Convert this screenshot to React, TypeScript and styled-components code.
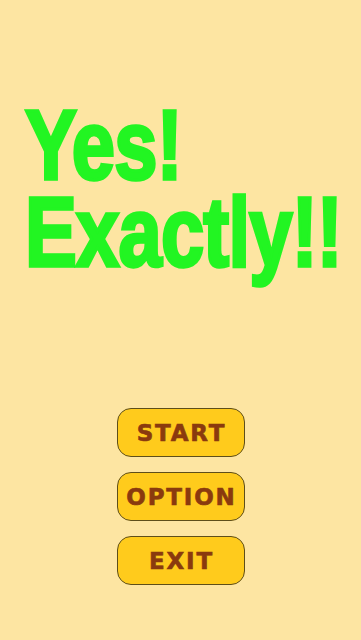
import React from 'react';
import styled, { createGlobalStyle } from 'styled-components';

const GlobalStyle = createGlobalStyle`
  html, body {
    margin: 0;
    padding: 0;
    background: #fde5a2;
  }
  #root {
    min-height: 100vh;
  }
`;

const Screen = styled.div`
  width: 100%;
  height: 100vh;
  background: #fde5a2;
  display: flex;
  flex-direction: column;
  align-items: stretch;
  overflow: hidden;
`;

// Impact-like heading: Arial bold squeezed horizontally and thickened
const Title = styled.h1`
  margin: 101px 0 0 25px;
  font-family: 'Liberation Sans', Arial, sans-serif;
  font-weight: 700;
  font-size: 99px;
  line-height: 87px;
  color: #22f522;
  -webkit-text-stroke: 3.5px #22f522;
  letter-spacing: -1px;
  transform-origin: left top;
  transform: scaleX(0.785);
  white-space: nowrap;
`;

const Menu = styled.div`
  margin-top: auto;
  margin-bottom: 55px;
  display: flex;
  flex-direction: column;
  align-items: center;
  gap: 15px;
`;

const MenuButton = styled.button`
  width: 128px;
  height: 49px;
  box-sizing: border-box;
  border-radius: 14px;
  border: 1.5px solid #5e4e1a;
  background: #ffcb1c;
  color: #8a3a0e;
  font-family: 'DejaVu Sans', Verdana, sans-serif;
  font-weight: 700;
  font-size: 23px;
  letter-spacing: 1.8px;
  -webkit-text-stroke: 0.6px #8a3a0e;
  padding: 0 0 0 2px;
  display: flex;
  align-items: center;
  justify-content: center;
  cursor: pointer;
`;

const App: React.FC = () => {
  return (
    <>
      <GlobalStyle />
      <Screen>
        <Title>
          Yes!
          <br />
          Exactly!!
        </Title>
        <Menu>
          <MenuButton>START</MenuButton>
          <MenuButton>OPTION</MenuButton>
          <MenuButton>EXIT</MenuButton>
        </Menu>
      </Screen>
    </>
  );
};

export default App;
